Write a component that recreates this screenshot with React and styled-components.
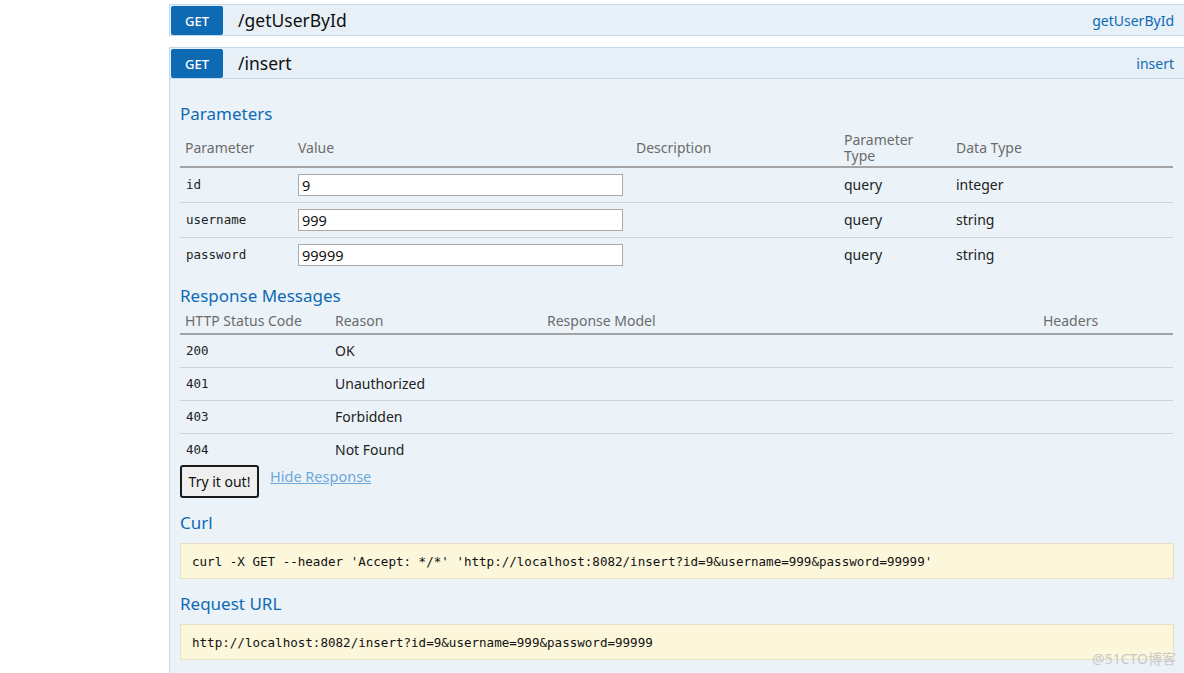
import React from "react";
import styled, { createGlobalStyle } from "styled-components";

const GlobalStyle = createGlobalStyle`
  body {
    margin: 0;
    background: #fff;
    font-family: "Noto Sans", "Open Sans", sans-serif;
    color: #222;
  }
`;

const Page = styled.div`
  position: relative;
  padding: 4px 0 0 169px;
  height: 673px;
  overflow: hidden;
  box-sizing: border-box;
`;

const Endpoint = styled.div`
  margin-bottom: ${({ open }) => (open ? "0" : "11px")};
  width: 1016px;
`;

const Heading = styled.div`
  display: flex;
  align-items: flex-start;
  height: 29px;
  padding: 1px 10px 0 1px;
  background: #e7f0f7;
  border: 1px solid #c3d9ec;
`;

const Method = styled.span`
  display: flex;
  align-items: center;
  justify-content: center;
  width: 52px;
  height: 29px;
  border-radius: 2px;
  background: #0f6ab4;
  color: #fff;
  font-size: 13px;
  font-weight: 500;
`;

const Path = styled.span`
  flex: 1;
  margin-left: 15px;
  font-size: 17.5px;
  line-height: 29px;
  color: #111;
`;

const OpLink = styled.a`
  font-size: 14px;
  line-height: 29px;
  color: #0f6ab4;
  text-decoration: none;
`;

const Content = styled.div`
  background: #ebf3f9;
  border: 1px solid #c3d9ec;
  border-top: none;
  padding: 24px 10px 20px;
`;

const Title = styled.h4`
  margin: ${({ top }) => top || "0"} 0 0;
  font-size: 17px;
  font-weight: normal;
  line-height: 22px;
  color: #0f6ab4;
`;

const Table = styled.table`
  width: 993px;
  table-layout: fixed;
  border-collapse: collapse;
  font-size: 14px;

  th {
    text-align: left;
    font-weight: normal;
    color: #6b6b6b;
    padding: 0 5px;
    line-height: 16px;
    border-bottom: 2px solid #a3a3a3;
  }

  td {
    padding: 0 5px;
    border-bottom: 1px solid #cfd4d8;
  }

  tbody tr:last-child td {
    border-bottom: none;
  }
`;

const ParamHead = styled.tr`
  height: 38px;
`;

const ParamRow = styled.tr`
  height: 35px;
`;

const RespHead = styled.tr`
  height: 27px;

  th {
    padding-top: 2px;
  }
`;

const RespRow = styled.tr`
  height: ${({ last }) => (last ? "32px" : "33px")};
`;

const Mono = styled.td`
  font-family: "DejaVu Sans Mono", "Liberation Mono", monospace;
  font-size: 12.5px;
  color: #222;

  && {
    padding-left: 6px;
  }
`;

const ValueInput = styled.input`
  box-sizing: border-box;
  width: 325px;
  height: 22px;
  margin: 0;
  padding: 0 3px;
  border: 1px solid #a9a9a9;
  background: #fff;
  font-family: "Noto Sans", sans-serif;
  font-size: 14.5px;
  color: #111;
  outline: none;
`;

const Actions = styled.div`
  display: flex;
  align-items: flex-start;
  gap: 11px;
`;

const TryButton = styled.button`
  width: 79px;
  height: 33px;
  padding: 0;
  border: 2px solid #1a1a1a;
  border-radius: 3px;
  background: #efefef;
  font-family: "Noto Sans", sans-serif;
  font-size: 14px;
  color: #111;
`;

const HideLink = styled.a`
  margin-top: 1px;
  font-size: 14.5px;
  line-height: 20px;
  color: #6ea8d9;
  text-decoration: underline;
`;

const Block = styled.pre`
  margin: 9px 0 0;
  height: 34px;
  padding: 0 11px;
  display: flex;
  align-items: center;
  background: #fcf6db;
  border: 1px solid #e5e0c6;
  font-family: "DejaVu Sans Mono", "Liberation Mono", monospace;
  font-size: 12.55px;
  color: #111;
`;

const Watermark = styled.div`
  position: absolute;
  right: 8px;
  bottom: 5px;
  font-family: "Noto Sans", "Noto Sans CJK SC", sans-serif;
  font-size: 14px;
  color: #c9c9c9;
`;

const params = [
  { name: "id", value: "9", type: "integer" },
  { name: "username", value: "999", type: "string" },
  { name: "password", value: "99999", type: "string" },
];

const responses = [
  ["200", "OK"],
  ["401", "Unauthorized"],
  ["403", "Forbidden"],
  ["404", "Not Found"],
];

const url = "http://localhost:8082/insert?id=9&username=999&password=99999";

export default function App() {
  return (
    <>
      <GlobalStyle />
      <Page>
        <Endpoint>
          <Heading>
            <Method>GET</Method>
            <Path>/getUserById</Path>
            <OpLink href="#">getUserById</OpLink>
          </Heading>
        </Endpoint>

        <Endpoint open>
          <Heading>
            <Method>GET</Method>
            <Path>/insert</Path>
            <OpLink href="#">insert</OpLink>
          </Heading>
          <Content>
            <Title>Parameters</Title>
            <Table style={{ marginTop: 4 }}>
              <colgroup>
                <col style={{ width: 113 }} />
                <col style={{ width: 338 }} />
                <col style={{ width: 208 }} />
                <col style={{ width: 112 }} />
                <col />
              </colgroup>
              <thead>
                <ParamHead>
                  <th>Parameter</th>
                  <th>Value</th>
                  <th>Description</th>
                  <th>
                    Parameter
                    <br />
                    Type
                  </th>
                  <th>Data Type</th>
                </ParamHead>
              </thead>
              <tbody>
                {params.map((p) => (
                  <ParamRow key={p.name}>
                    <Mono>{p.name}</Mono>
                    <td>
                      <ValueInput defaultValue={p.value} />
                    </td>
                    <td></td>
                    <td>query</td>
                    <td>{p.type}</td>
                  </ParamRow>
                ))}
              </tbody>
            </Table>

            <Title top="13px">Response Messages</Title>
            <Table>
              <colgroup>
                <col style={{ width: 150 }} />
                <col style={{ width: 212 }} />
                <col style={{ width: 496 }} />
                <col />
              </colgroup>
              <thead>
                <RespHead>
                  <th>HTTP Status Code</th>
                  <th>Reason</th>
                  <th>Response Model</th>
                  <th>Headers</th>
                </RespHead>
              </thead>
              <tbody>
                {responses.map(([code, reason], i) => (
                  <RespRow key={code} last={i === responses.length - 1}>
                    <Mono>{code}</Mono>
                    <td>{reason}</td>
                    <td></td>
                    <td></td>
                  </RespRow>
                ))}
              </tbody>
            </Table>

            <Actions>
              <TryButton>Try it out!</TryButton>
              <HideLink href="#">Hide Response</HideLink>
            </Actions>

            <Title top="14px">Curl</Title>
            <Block>{`curl -X GET --header 'Accept: */*' '${url}'`}</Block>

            <Title top="14px">Request URL</Title>
            <Block>{url}</Block>
          </Content>
        </Endpoint>
        <Watermark>@51CTO博客</Watermark>
      </Page>
    </>
  );
}
